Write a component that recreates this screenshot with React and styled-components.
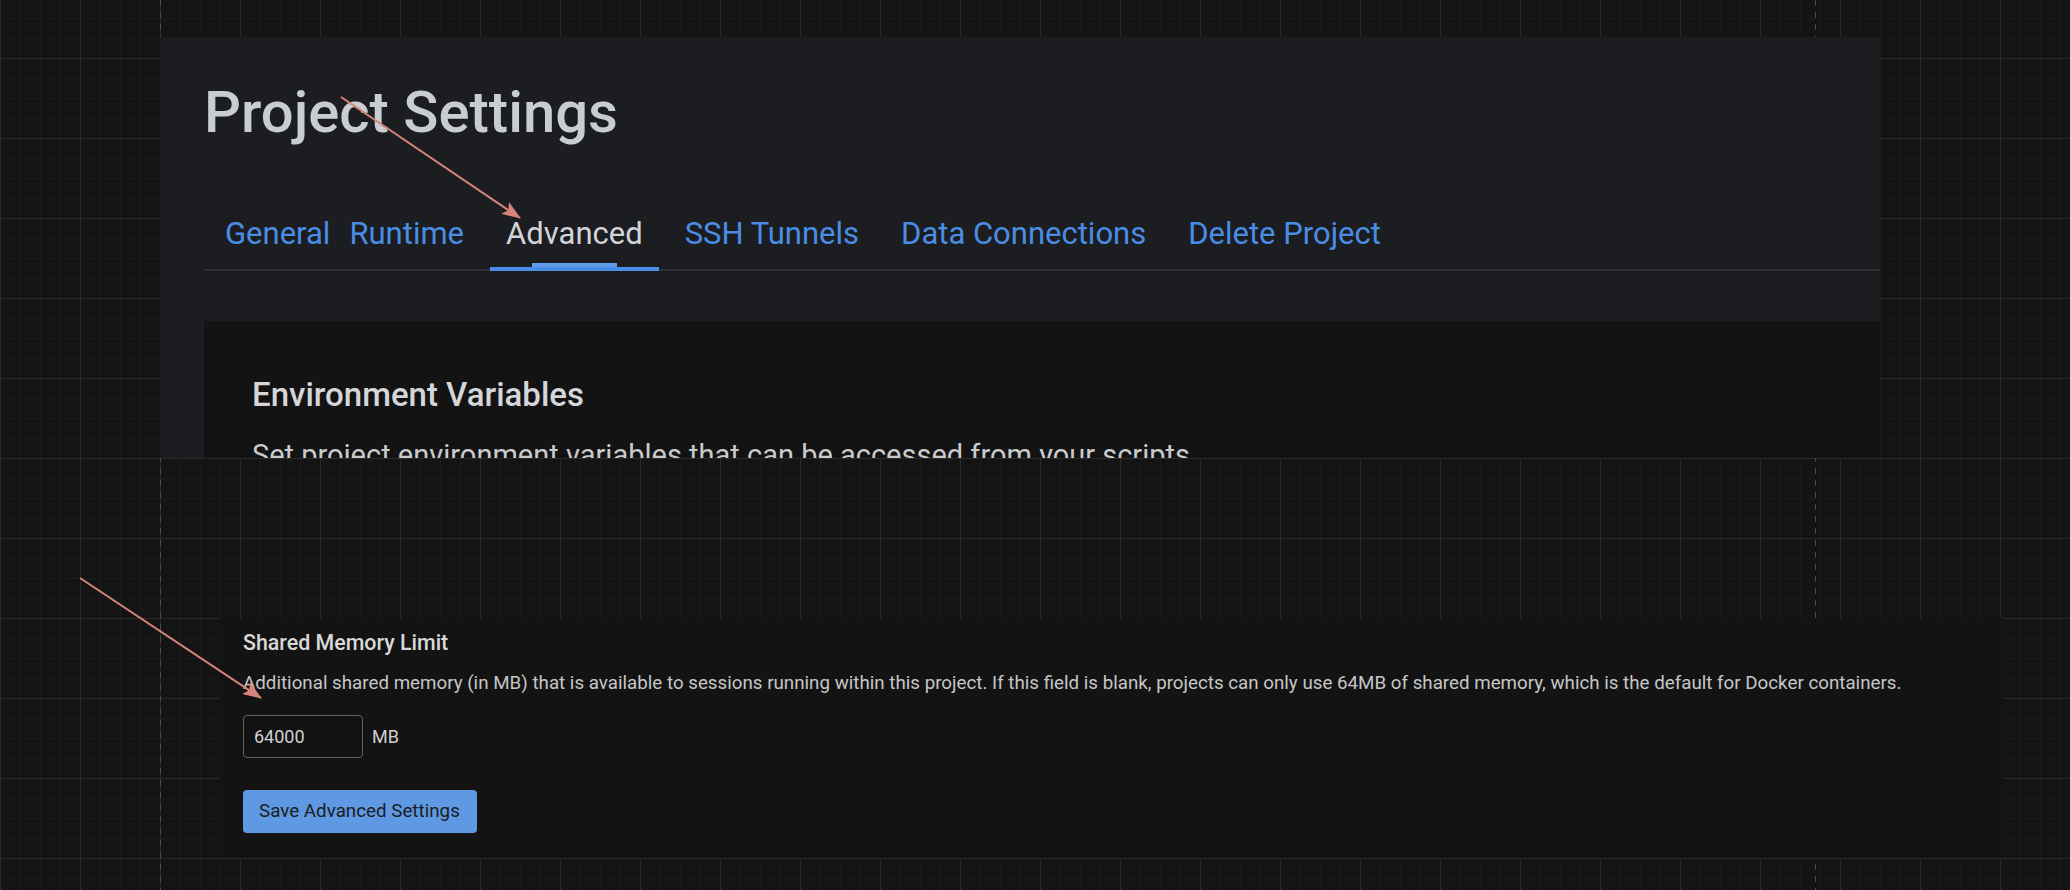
import React from "react";
import styled, { createGlobalStyle, css } from "styled-components";

const GlobalStyle = createGlobalStyle`
  html, body {
    margin: 0;
    padding: 0;
    background: #141414;
  }
  body {
    font-family: Roboto, "Liberation Sans", Arial, sans-serif;
  }
`;

const TABS = [
  { label: "General", pad: "0 4px 17px 21px" },
  { label: "Runtime", pad: "0 16px 17px 5px" },
  { label: "Advanced", active: true },
  { label: "SSH Tunnels" },
  { label: "Data Connections" },
  { label: "Delete Project" },
];

export default function App() {
  return (
    <Page>
      <GlobalStyle />
      <TopShot>
        <Panel>
          <Title>Project Settings</Title>
          <TabList>
            {TABS.map((t) => (
              <Tab key={t.label} $active={t.active} $pad={t.pad}>
                {t.label}
              </Tab>
            ))}
          </TabList>
          <EnvCard>
            <CardTitle>Environment Variables</CardTitle>
            <CardText>
              Set project environment variables that can be accessed from your scripts.
            </CardText>
          </EnvCard>
        </Panel>
      </TopShot>

      <BottomShot>
        <FormCard>
          <FieldLabel>Shared Memory Limit</FieldLabel>
          <FieldHelp>
            Additional shared memory (in MB) that is available to sessions running within this
            project. If this field is blank, projects can only use 64MB of shared memory, which is
            the default for Docker containers.
          </FieldHelp>
          <InputRow>
            <NumberInput defaultValue="64000" />
            <Unit>MB</Unit>
          </InputRow>
          <SaveButton>Save Advanced Settings</SaveButton>
        </FormCard>
      </BottomShot>

      <Callouts viewBox="0 0 2070 890">
        <defs>
          <marker
            id="head"
            markerUnits="userSpaceOnUse"
            markerWidth="20"
            markerHeight="16"
            refX="18"
            refY="8"
            orient="auto"
          >
            <path d="M0 1 L19 8 L0 15 L4 8 Z" fill="#d4847a" />
          </marker>
        </defs>
        <line x1="341" y1="97" x2="520" y2="218" stroke="#d4847a" strokeWidth="2" markerEnd="url(#head)" />
        <line x1="80" y1="578" x2="261" y2="698" stroke="#d4847a" strokeWidth="2" markerEnd="url(#head)" />
      </Callouts>
    </Page>
  );
}

const Page = styled.div`
  position: relative;
  width: 2070px;
  height: 890px;
  overflow: hidden;
  background-color: #141414;
  background-image:
    repeating-linear-gradient(to bottom, #4b4b4b 0 6px, transparent 6px 12px),
    repeating-linear-gradient(to bottom, #4b4b4b 0 6px, transparent 6px 12px),
    linear-gradient(to right, #2a2a2a 1px, transparent 1px),
    linear-gradient(to bottom, #2a2a2a 1px, transparent 1px),
    linear-gradient(to right, #1b1b1b 1px, transparent 1px),
    linear-gradient(to bottom, #1b1b1b 1px, transparent 1px);
  background-size: 1px 100%, 1px 100%, 80px 80px, 80px 80px, 20px 20px, 20px 20px;
  background-position: 160px 0, 1815px 0, 0 0, 0 58px, 0 0, 0 58px;
  background-repeat: no-repeat, no-repeat, repeat, repeat, repeat, repeat;
`;

const TopShot = styled.div`
  height: 458px;
  overflow: hidden;
  box-sizing: border-box;
  padding: 37px 0 0 160px;
`;

const Panel = styled.div`
  width: 1720px;
  box-sizing: border-box;
  padding: 41px 0 0 44px;
  background: #1c1d20;
`;

const Title = styled.h1`
  margin: 0 0 68px;
  font-size: 58px;
  line-height: 1.2;
  font-weight: 500;
  color: #c9cdd1;
`;

const TabList = styled.div`
  display: flex;
  gap: 10px;
  border-bottom: 2px solid #2e3034;
`;

const Tab = styled.div`
  position: relative;
  padding: ${(p) => p.$pad || "0 16px 17px"};
  font-size: 31px;
  line-height: 36px;
  color: ${(p) => (p.$active ? "#d2d5d8" : "#4a8de4")};

  ${(p) =>
    p.$active &&
    css`
      &::after {
        content: "";
        position: absolute;
        left: 0;
        right: 0;
        bottom: -2px;
        height: 4px;
        background: #4a8de4;
      }
      &::before {
        content: "";
        position: absolute;
        left: 25%;
        right: 25%;
        bottom: 2px;
        height: 4px;
        background: #5f9be6;
      }
    `}
`;

const EnvCard = styled.div`
  margin-top: 50px;
  min-height: 300px;
  box-sizing: border-box;
  padding: 54px 48px 0;
  background: #131314;
`;

const CardTitle = styled.h2`
  margin: 0 0 20px;
  font-size: 33px;
  line-height: 1.2;
  font-weight: 500;
  color: #d4d6d9;
`;

const CardText = styled.p`
  margin: 0;
  font-size: 29px;
  line-height: 1.5;
  color: #c8cacc;
`;

const BottomShot = styled.div`
  height: 432px;
  box-sizing: border-box;
  padding: 160px 0 0 220px;
`;

const FormCard = styled.div`
  width: 1783px;
  height: 240px;
  box-sizing: border-box;
  padding: 12px 24px 0 23px;
  background: #131313;
  display: flex;
  flex-direction: column;
  align-items: flex-start;
`;

const FieldLabel = styled.div`
  font-size: 21.4px;
  line-height: 1.2;
  font-weight: 500;
  color: #d8d8d8;
`;

const FieldHelp = styled.p`
  margin: 14px 0 0;
  font-size: 18.75px;
  line-height: 1.45;
  color: #c6c6c6;
`;

const InputRow = styled.div`
  display: flex;
  align-items: center;
  gap: 9px;
  margin-top: 18px;
`;

const NumberInput = styled.input`
  width: 120px;
  height: 43px;
  box-sizing: border-box;
  padding: 0 10px;
  border: 1px solid #626262;
  border-radius: 4px;
  background: #121212;
  color: #d0d0d0;
  font-family: Roboto, "Liberation Sans", sans-serif;
  font-size: 18px;
  outline: none;
`;

const Unit = styled.span`
  font-size: 18px;
  color: #d0d0d0;
`;

const SaveButton = styled.button`
  margin-top: 32px;
  height: 43px;
  padding: 0 17px 0 16px;
  border: none;
  border-radius: 4px;
  background: #5f98e3;
  color: #1b1d21;
  font-family: Roboto, "Liberation Sans", sans-serif;
  font-size: 18.8px;
  cursor: pointer;
`;

const Callouts = styled.svg`
  position: absolute;
  left: 0;
  top: 0;
  width: 2070px;
  height: 890px;
  pointer-events: none;
`;
